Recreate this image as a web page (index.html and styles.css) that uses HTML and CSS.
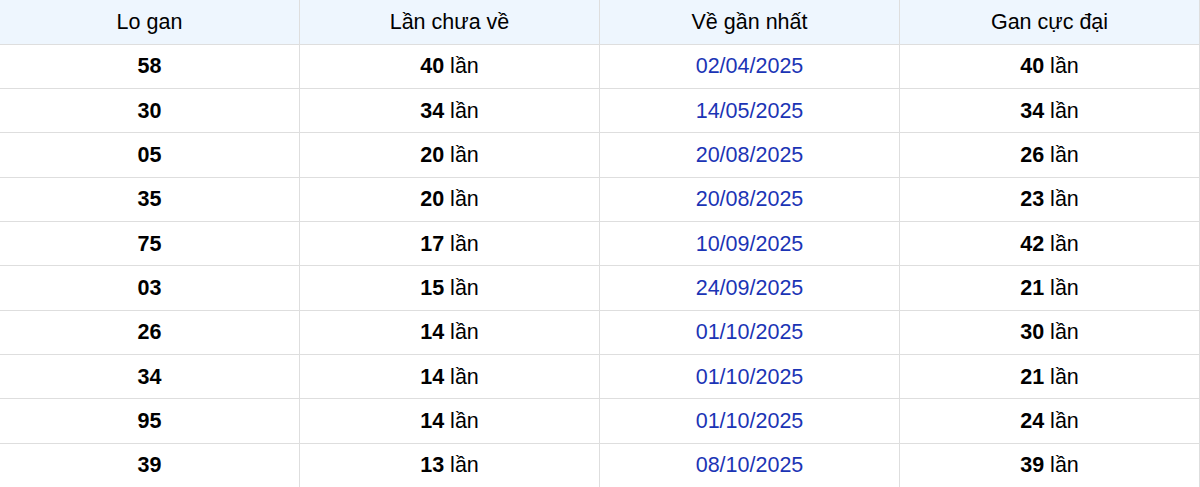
FILE: index.html
```html
<!DOCTYPE html>
<html lang="vi">
<head>
<meta charset="utf-8">
<title>Lo gan</title>
<link rel="stylesheet" href="styles.css">
</head>
<body>
<table class="gan-table">
  <thead>
    <tr><th>Lo gan</th><th>Lần chưa về</th><th>Về gần nhất</th><th>Gan cực đại</th></tr>
  </thead>
  <tbody>
    <tr><td><b>58</b></td><td><b>40</b> lần</td><td class="date">02/04/2025</td><td><b>40</b> lần</td></tr>
    <tr><td><b>30</b></td><td><b>34</b> lần</td><td class="date">14/05/2025</td><td><b>34</b> lần</td></tr>
    <tr><td><b>05</b></td><td><b>20</b> lần</td><td class="date">20/08/2025</td><td><b>26</b> lần</td></tr>
    <tr><td><b>35</b></td><td><b>20</b> lần</td><td class="date">20/08/2025</td><td><b>23</b> lần</td></tr>
    <tr><td><b>75</b></td><td><b>17</b> lần</td><td class="date">10/09/2025</td><td><b>42</b> lần</td></tr>
    <tr><td><b>03</b></td><td><b>15</b> lần</td><td class="date">24/09/2025</td><td><b>21</b> lần</td></tr>
    <tr><td><b>26</b></td><td><b>14</b> lần</td><td class="date">01/10/2025</td><td><b>30</b> lần</td></tr>
    <tr><td><b>34</b></td><td><b>14</b> lần</td><td class="date">01/10/2025</td><td><b>21</b> lần</td></tr>
    <tr><td><b>95</b></td><td><b>14</b> lần</td><td class="date">01/10/2025</td><td><b>24</b> lần</td></tr>
    <tr><td><b>39</b></td><td><b>13</b> lần</td><td class="date">08/10/2025</td><td><b>39</b> lần</td></tr>
  </tbody>
</table>
</body>
</html>
```
FILE: styles.css
```css
html, body {
  margin: 0;
  padding: 0;
  background: #ffffff;
}
body {
  font-family: "Liberation Sans", Arial, sans-serif;
  color: #000000;
  overflow: hidden;
}
.gan-table {
  width: 1201px;
  margin-left: -1px;
  border-collapse: collapse;
  table-layout: fixed;
  font-size: 21.5px;
}
.gan-table th,
.gan-table td {
  border: 1px solid #dedede;
  text-align: center;
  vertical-align: middle;
  padding: 0;
  line-height: 24px;
}
.gan-table thead tr {
  height: 44px;
}
.gan-table th {
  background: #eef6fe;
  font-weight: normal;
  border-top: none;
}
.gan-table tbody tr {
  height: 44.35px;
}
.gan-table b {
  font-weight: bold;
}
.gan-table .date {
  color: #1b34b5;
}
```
